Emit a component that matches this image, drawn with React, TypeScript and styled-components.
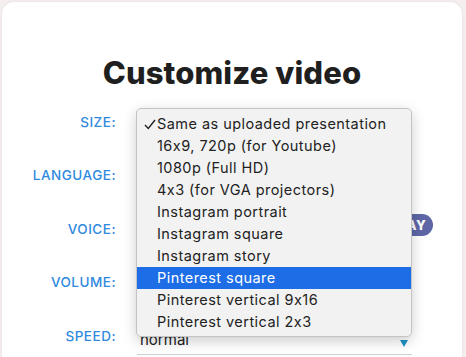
import * as React from 'react';
import styled, { createGlobalStyle } from 'styled-components';

const GlobalStyle = createGlobalStyle`
  html, body {
    margin: 0;
    padding: 0;
    background: #f5efef;
    overflow: hidden;
  }
`;

const Card = styled.div`
  margin: 2px 4px 0 2px;
  min-height: 420px;
  background: #ffffff;
  border-radius: 12px;
  box-shadow: 0 0 3px rgba(120, 90, 90, 0.12);
  padding-top: 52px;
  box-sizing: border-box;
  font-family: Inter, 'Noto Sans', sans-serif;
  font-feature-settings: 'calt' 0;
`;

const Title = styled.h1`
  margin: 0;
  text-align: center;
  font-size: 31px;
  font-weight: 800;
  line-height: 38px;
  color: #1f1f1f;
  letter-spacing: 0.1px;
`;

const Form = styled.div`
  display: grid;
  grid-template-columns: 114px 275px;
  column-gap: 21px;
  row-gap: 21.5px;
  margin: 17px 0 0 0;
  align-items: center;
`;

const Label = styled.div`
  text-align: right;
  color: #2f8ae0;
  font-size: 13.5px;
  font-weight: 500;
  letter-spacing: 0.5px;
  padding-bottom: 7px;
`;

const SelectBox = styled.div<{ $width?: number }>`
  position: relative;
  width: ${({ $width }) => ($width ? `${$width}px` : '100%')};
  height: 32px;
  box-sizing: border-box;
  border-bottom: 1px solid #cfcfcf;
  display: flex;
  align-items: center;
  padding: 2px 3px 0;
  font-size: 15px;
  color: #222;
`;

const Arrow = styled.span`
  margin-left: auto;
  width: 0;
  height: 0;
  border-left: 4.5px solid transparent;
  border-right: 4.5px solid transparent;
  border-top: 7px solid #1e93c6;
  margin-right: 1px;
  margin-top: 8px;
`;

const VoiceCell = styled.div`
  display: flex;
  align-items: center;
  gap: 24px;
  width: 296px;
`;

const PlayButton = styled.button`
  width: 50px;
  height: 22px;
  border: none;
  border-radius: 11px;
  background: #5e66a6;
  color: #fff;
  font-family: Inter, sans-serif;
  font-weight: 800;
  font-size: 13px;
  letter-spacing: 0.5px;
  margin-top: -15px;
  padding: 0;
`;

const Menu = styled.ul`
  position: absolute;
  top: -1px;
  left: -1px;
  width: 276px;
  margin: 0;
  padding: 4px 0 3px;
  list-style: none;
  background: #f2f2f2;
  border: 1px solid #c4c4c4;
  border-radius: 5px;
  box-sizing: border-box;
  box-shadow: 0 4px 14px rgba(0, 0, 0, 0.2);
  z-index: 10;
  font-size: 14.5px;
  letter-spacing: 0.45px;
`;

const Option = styled.li<{ $active?: boolean }>`
  position: relative;
  height: 22px;
  line-height: 22px;
  padding-left: 20px;
  color: ${({ $active }) => ($active ? '#ffffff' : '#222222')};
  background: ${({ $active }) => ($active ? '#1c6de6' : 'transparent')};
  white-space: nowrap;
`;

const Check = styled.svg`
  position: absolute;
  left: 7px;
  top: 6px;
`;

const sizes = [
  'Same as uploaded presentation',
  '16x9, 720p (for Youtube)',
  '1080p (Full HD)',
  '4x3 (for VGA projectors)',
  'Instagram portrait',
  'Instagram square',
  'Instagram story',
  'Pinterest square',
  'Pinterest vertical 9x16',
  'Pinterest vertical 2x3',
];

export default function App() {
  return (
    <>
      <GlobalStyle />
      <Card>
        <Title>Customize video</Title>
        <Form>
          <Label>SIZE:</Label>
          <SelectBox>
            <span>Same as uploaded presentation</span>
            <Arrow />
            <Menu>
              {sizes.map((s, i) => (
                <Option key={s} $active={i === 7}>
                  {i === 0 && (
                    <Check width="12" height="11" viewBox="0 0 12 11">
                      <polyline
                        points="1,6 4.3,9.5 11,1"
                        fill="none"
                        stroke="#222"
                        strokeWidth="1.4"
                      />
                    </Check>
                  )}
                  {s}
                </Option>
              ))}
            </Menu>
          </SelectBox>

          <Label>LANGUAGE:</Label>
          <SelectBox>
            <span>English</span>
            <Arrow />
          </SelectBox>

          <Label>VOICE:</Label>
          <VoiceCell>
            <SelectBox $width={222}>
              <span>Joanna</span>
              <Arrow />
            </SelectBox>
            <PlayButton>PLAY</PlayButton>
          </VoiceCell>

          <Label>VOLUME:</Label>
          <SelectBox>
            <span>medium</span>
            <Arrow />
          </SelectBox>

          <Label>SPEED:</Label>
          <SelectBox>
            <span>normal</span>
            <Arrow />
          </SelectBox>
        </Form>
      </Card>
    </>
  );
}
